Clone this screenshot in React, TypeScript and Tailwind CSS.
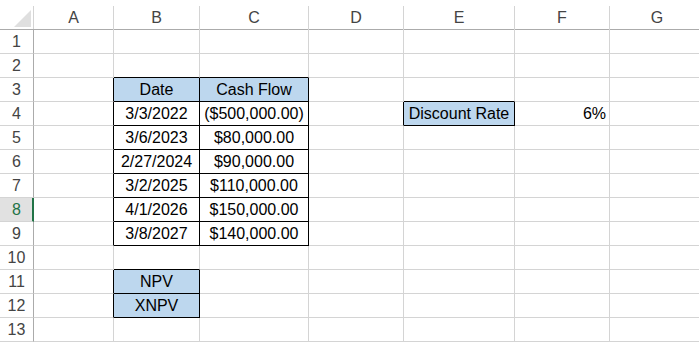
type Cell = {
  text?: string;
  align?: "left" | "center" | "right";
  fill?: boolean;
  boxed?: boolean;
};

const cols = [
  { key: "A", w: "w-[80px]" },
  { key: "B", w: "w-[86px]" },
  { key: "C", w: "w-[109px]" },
  { key: "D", w: "w-[95px]" },
  { key: "E", w: "w-[111px]" },
  { key: "F", w: "w-[95px]" },
  { key: "G", w: "w-[95px]" },
];

const data: Record<string, Cell> = {
  B3: { text: "Date", align: "center", fill: true, boxed: true },
  C3: { text: "Cash Flow", align: "center", fill: true, boxed: true },
  B4: { text: "3/3/2022", align: "center", boxed: true },
  C4: { text: "($500,000.00)", align: "center", boxed: true },
  B5: { text: "3/6/2023", align: "center", boxed: true },
  C5: { text: "$80,000.00", align: "center", boxed: true },
  B6: { text: "2/27/2024", align: "center", boxed: true },
  C6: { text: "$90,000.00", align: "center", boxed: true },
  B7: { text: "3/2/2025", align: "center", boxed: true },
  C7: { text: "$110,000.00", align: "center", boxed: true },
  B8: { text: "4/1/2026", align: "center", boxed: true },
  C8: { text: "$150,000.00", align: "center", boxed: true },
  B9: { text: "3/8/2027", align: "center", boxed: true },
  C9: { text: "$140,000.00", align: "center", boxed: true },
  B11: { text: "NPV", align: "center", fill: true, boxed: true },
  B12: { text: "XNPV", align: "center", fill: true, boxed: true },
  E4: { text: "Discount Rate", align: "center", fill: true, boxed: true },
  F4: { text: "6%", align: "right" },
};

const rows = Array.from({ length: 13 }, (_, i) => i + 1);

function boxed(col: number, row: number) {
  const c = cols[col];
  if (!c) return false;
  return !!data[`${c.key}${row}`]?.boxed;
}

export default function App() {
  return (
    <div className="h-[343px] w-[699px] overflow-hidden bg-white font-['Liberation_Sans',Arial,sans-serif] text-[16px]">
      {/* column headers */}
      <div className="flex h-[30px] border-b border-[#ababab]">
        <div className="flex w-[34px] shrink-0 flex-col pt-[6px]">
          <div className="relative flex-1 border-r border-[#d4d4d4]">
            <svg className="absolute left-[14px] top-[4px]" width="17" height="17" viewBox="0 0 17 17">
              <polygon points="17,0 17,17 0,17" fill="#dfdfdf" />
            </svg>
          </div>
        </div>
        {cols.map((c) => (
          <div key={c.key} className={`flex shrink-0 flex-col pt-[6px] ${c.w}`}>
            <div className="flex flex-1 items-center justify-center border-r border-[#d4d4d4] text-[#444]">
              {c.key}
            </div>
          </div>
        ))}
      </div>

      {rows.map((r) => {
        const selected = r === 8;
        return (
          <div key={r} className="flex h-[24px]">
            <div
              className={`flex w-[34px] shrink-0 items-center justify-center border-b border-[#d4d4d4] ${
                selected
                  ? "border-r-2 border-r-[#217346] bg-[#e1e1e1] pl-[1px] text-[#217346]"
                  : "border-r border-r-[#ababab] text-[#444]"
              }`}
            >
              {r}
            </div>
            {cols.map((c, ci) => {
              const cell = data[`${c.key}${r}`];
              const me = boxed(ci, r);
              const rightBlack = me || boxed(ci + 1, r);
              const bottomBlack = me || boxed(ci, r + 1);
              const align =
                cell?.align === "right"
                  ? "justify-end pr-[3px]"
                  : cell?.align === "left"
                  ? "justify-start pl-[3px]"
                  : "justify-center";
              return (
                <div
                  key={c.key}
                  className={`flex shrink-0 items-center whitespace-nowrap border-b border-r pt-[1px] text-black ${c.w} ${align} ${
                    rightBlack ? "border-r-black" : "border-r-[#d4d4d4]"
                  } ${bottomBlack ? "border-b-black" : "border-b-[#d4d4d4]"} ${
                    cell?.fill ? "bg-[#bdd7ee]" : ""
                  } ${
                    (me && ci === 1 && !boxed(0, r)) || (me && ci === 4)
                      ? "shadow-[inset_0_0_0_0_black]"
                      : ""
                  }`}
                >
                  {cell?.text}
                </div>
              );
            })}
          </div>
        );
      })}
    </div>
  );
}
